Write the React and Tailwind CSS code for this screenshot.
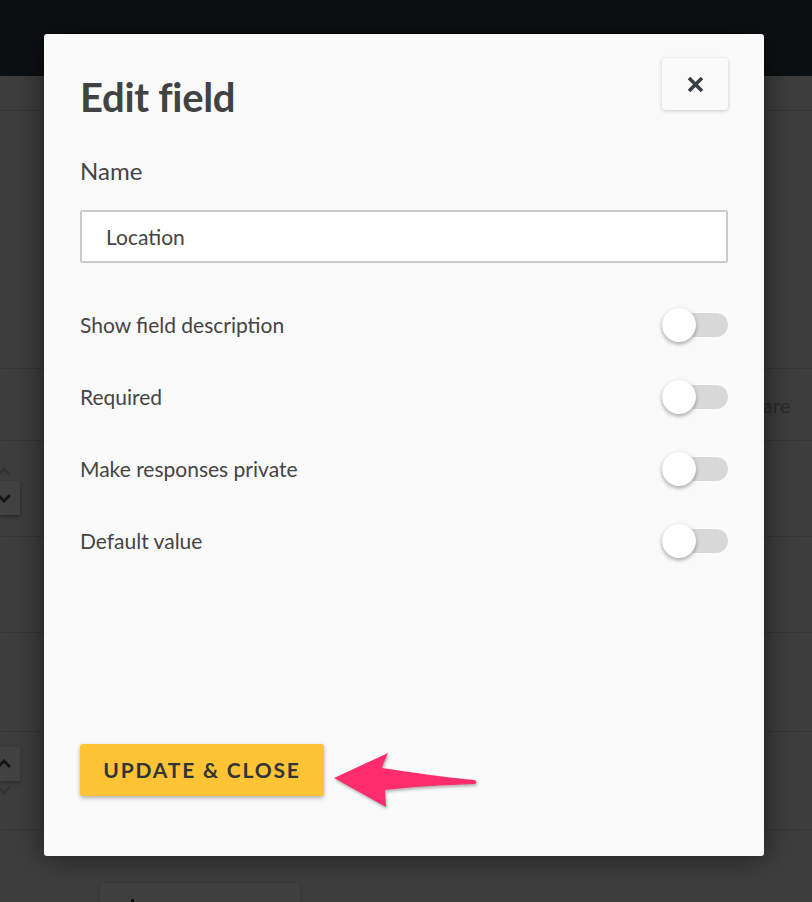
import React from "react";

function Toggle() {
  return (
    <div className="relative w-[66px] h-[34px] flex items-center">
      <div className="w-full h-[24px] rounded-full bg-[#d9d8d8]" />
      <div className="absolute left-0 top-0 w-[34px] h-[34px] rounded-full bg-white shadow-[0_2px_4px_rgba(0,0,0,0.35)]" />
    </div>
  );
}

function Row({ label }) {
  return (
    <div className="h-[72px] flex items-center justify-between">
      <span className="text-[21px] text-[#444]">{label}</span>
      <Toggle />
    </div>
  );
}

function Chevron({ up, color }) {
  return (
    <svg width="14" height="10" viewBox="0 0 14 10">
      <path
        d={up ? "M1 8 L7 2 L13 8" : "M1 2 L7 8 L13 2"}
        fill="none"
        stroke={color}
        strokeWidth="3"
      />
    </svg>
  );
}

export default function App() {
  return (
    <div
      className="relative w-[812px] h-[902px] overflow-hidden bg-[#3d3d3d]"
      style={{ fontFamily: "Lato, 'Noto Sans', sans-serif" }}
    >
      {/* background page */}
      <div className="h-[76px] bg-[#0d1012]" />
      <div className="flex flex-col">
        <div className="h-[35px] border-b border-[#353535]" />
        <div className="h-[258px] border-b border-[#353535]" />
        <div className="h-[72px] border-b border-[#353535] flex items-center pl-[741px] text-[20px] text-[#2a2a2a]">
          Share
        </div>
        <div className="h-[96px] border-b border-[#353535] flex items-center">
          <div className="flex flex-col">
            <div className="h-[18px] flex items-center -ml-[3px]">
              <Chevron up color="#333" />
            </div>
            <div className="w-[20px] h-[34px] bg-[#424242] shadow-[0_2px_4px_rgba(0,0,0,0.35)] flex items-center">
              <div className="-ml-[3px]">
                <Chevron color="#151515" />
              </div>
            </div>
          </div>
        </div>
        <div className="h-[96px] border-b border-[#353535]" />
        <div className="h-[99px] border-b border-[#353535] flex items-end">
          <div className="flex flex-col translate-y-[68px]">
            <div className="w-[20px] h-[34px] bg-[#424242] shadow-[0_2px_4px_rgba(0,0,0,0.25)] flex items-center">
              <div className="-ml-[3px]">
                <Chevron up color="#151515" />
              </div>
            </div>
            <div className="h-[18px] flex items-center -ml-[3px]">
              <Chevron color="#333" />
            </div>
          </div>
        </div>
        <div className="h-[98px] border-b border-[#353535]" />
        <div className="h-[60px] pl-[100px] pt-[53px]">
          <div className="w-[200px] h-[30px] bg-[#404040] rounded-[3px] shadow-[0_1px_3px_rgba(0,0,0,0.3)] pl-[31px] pt-[16px]">
            <div className="w-[3px] h-[6px] bg-[#111]" />
          </div>
        </div>
      </div>

      {/* modal */}
      <div className="absolute left-[44px] top-[34px] w-[720px] h-[822px] bg-[#fafafa] rounded-[3px] shadow-[0_0_28px_rgba(0,0,0,0.55)] px-[36px] flex flex-col">
        <div className="flex items-start justify-between pt-[24px]">
          <h1 className="text-[40px] font-bold text-[#424242] mt-[19px] leading-none tracking-[-0.3px]">
            Edit field
          </h1>
          <button className="w-[66px] h-[52px] rounded-[4px] bg-[#fafafa] shadow-[0_1px_4px_rgba(0,0,0,0.2)] flex items-center justify-center">
            <svg width="17" height="17" viewBox="0 0 17 17">
              <path
                d="M2 2 L15 15 M15 2 L2 15"
                stroke="#3a3f45"
                strokeWidth="3.6"
                strokeLinecap="butt"
              />
            </svg>
          </button>
        </div>
        <div className="mt-[42px] text-[24px] text-[#444] leading-none">Name</div>
        <div className="mt-[27px] h-[53px] border-2 border-[#cbcbcb] bg-white rounded-[2px] flex items-center pl-[24px] text-[21px] text-[#444]">
          Location
        </div>
        <div className="mt-[26px] flex flex-col">
          <Row label="Show field description" />
          <Row label="Required" />
          <Row label="Make responses private" />
          <Row label="Default value" />
        </div>
        <div className="mt-[167px] flex items-center">
          <button className="w-[244px] h-[52px] rounded-[3px] bg-[#ffc435] shadow-[0_2px_4px_rgba(0,0,0,0.3)] text-[21px] font-bold tracking-[1.8px] text-[#2f3438]">
            UPDATE &amp; CLOSE
          </button>
        </div>
      </div>

      {/* annotation arrow */}
      <svg
        className="absolute left-[330px] top-[748px]"
        width="154"
        height="66"
        viewBox="0 0 154 66"
        style={{ filter: "drop-shadow(1px 2px 1.5px rgba(0,0,0,0.3))" }}
      >
        <path
          d="M4 30 L58 5 C55 12 53 16 52 20 C80 24 112 29 144 32 C147 32 147 36 144 36 C112 37 80 39 55 42 C55 48 56 53 56 59 Z"
          fill="#ff2d6b"
        />
      </svg>
    </div>
  );
}
